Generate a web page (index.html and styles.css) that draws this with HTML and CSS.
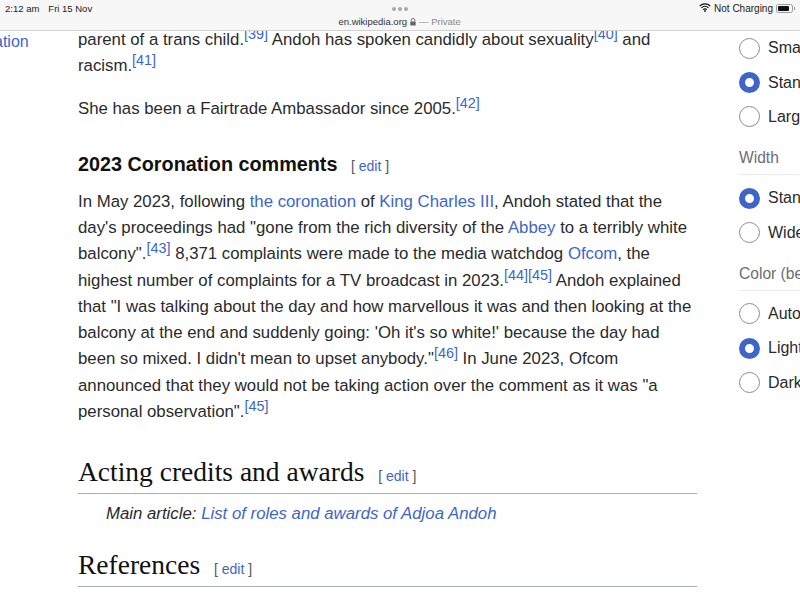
FILE: index.html
```html
<!DOCTYPE html>
<html lang="en">
<head>
    <meta charset="UTF-8">
    <meta name="viewport" content="width=device-width, initial-scale=1.0">
    <title>Adjoa Andoh</title>
    <link rel="stylesheet" href="styles.css">
</head>
<body>

<header class="browser-bar">
    <div class="status-left">
        <span>2:12 am</span>
        <span>Fri 15 Nov</span>
    </div>
    <div class="address">
        <div class="dots"><i></i><i></i><i></i></div>
        <div class="url">
            <span>en.wikipedia.org</span>
            <svg class="lock" width="6" height="8" viewBox="0 0 6 8">
                <path d="M1.2 3.5V2.2a1.8 1.8 0 0 1 3.6 0v1.3" fill="none" stroke="#666" stroke-width="0.9"/>
                <rect x="0.3" y="3.4" width="5.4" height="4.2" rx="0.7" fill="#666"/>
            </svg>
            <span class="private">— Private</span>
        </div>
    </div>
    <div class="status-right">
        <svg width="12" height="9" viewBox="0 0 12 9">
            <path d="M0.7 3.1a7.6 7.6 0 0 1 10.6 0M2.5 4.9a5 5 0 0 1 7 0M4.2 6.6a2.5 2.5 0 0 1 3.6 0" fill="none" stroke="#111" stroke-width="1.3"/>
            <circle cx="6" cy="8" r="0.9" fill="#111"/>
        </svg>
        <span class="charging">Not Charging</span>
        <div class="battery"><div class="battery-level"></div></div>
        <div class="battery-tip"></div>
    </div>
</header>

<div class="page">
    <aside class="toc-link"><a href="#">ation</a></aside>

    <main class="article">
        <p class="first">parent of a trans child.<sup>[39]</sup> Andoh has spoken candidly about sexuality<sup>[40]</sup> and racism.<sup>[41]</sup></p>
        <p class="ambassador">She has been a Fairtrade Ambassador since 2005.<sup>[42]</sup></p>

        <h3>2023 Coronation comments <span class="edit">[ <a href="#">edit</a> ]</span></h3>
        <p>In May 2023, following <a href="#">the coronation</a> of <a href="#">King Charles III</a>, Andoh stated that the day's proceedings had "gone from the rich diversity of the <a href="#">Abbey</a> to a terribly white balcony".<sup>[43]</sup> 8,371 complaints were made to the media watchdog <a href="#">Ofcom</a>, the highest number of complaints for a TV broadcast in 2023.<sup>[44][45]</sup> Andoh explained that "I was talking about the day and how marvellous it was and then looking at the balcony at the end and suddenly going: 'Oh it's so white!' because the day had been so mixed. I didn't mean to upset anybody."<sup>[46]</sup> In June 2023, Ofcom announced that they would not be taking action over the comment as it was "a personal observation".<sup>[45]</sup></p>

        <h2>Acting credits and awards <span class="edit">[ <a href="#">edit</a> ]</span></h2>
        <p class="hatnote">Main article: <a href="#">List of roles and awards of Adjoa Andoh</a></p>

        <h2 class="references">References <span class="edit">[ <a href="#">edit</a> ]</span></h2>
    </main>

    <aside class="settings">
        <label class="option"><span class="radio"></span>Small</label>
        <label class="option"><span class="radio checked"></span>Standard</label>
        <label class="option"><span class="radio"></span>Large</label>
        <div class="group-title">Width</div>
        <label class="option"><span class="radio checked"></span>Standard</label>
        <label class="option"><span class="radio"></span>Wide</label>
        <div class="group-title">Color (beta)</div>
        <label class="option"><span class="radio"></span>Automatic</label>
        <label class="option"><span class="radio checked"></span>Light</label>
        <label class="option"><span class="radio"></span>Dark</label>
    </aside>
</div>

</body>
</html>
```

FILE: styles.css
```css
html, body {
    margin: 0;
    height: 600px;
    overflow: hidden;
}

body {
    font-family: "Liberation Sans", Arial, sans-serif;
    background-color: #fff;
    color: #2a2b2c;
}

a {
    color: #3e66c8;
    text-decoration: none;
}

/* Browser bar */
.browser-bar {
    height: 31px;
    box-sizing: border-box;
    display: flex;
    justify-content: space-between;
    background-color: #f7f7f7;
    border-bottom: 1px solid #d2d2d2;
    font-size: 9.5px;
    color: #222;
}

.status-left {
    display: flex;
    gap: 9px;
    padding: 4px 0 0 5px;
    line-height: 10px;
}

.address {
    display: flex;
    flex-direction: column;
    align-items: center;
    margin-left: 8px;
}

.dots {
    display: flex;
    gap: 2px;
    margin-top: 7px;
}

.dots i {
    width: 4px;
    height: 4px;
    border-radius: 50%;
    background-color: #a8a8a8;
}

.url {
    display: flex;
    align-items: center;
    gap: 3px;
    margin-top: 6px;
    line-height: 10px;
    color: #333;
}

.private {
    color: #888;
}

.status-right {
    display: flex;
    align-items: flex-start;
    gap: 3px;
    padding: 3px 5px 0 0;
    line-height: 10px;
}

.charging {
    font-size: 10px;
    margin-top: 1px;
}

.battery {
    flex-shrink: 0;
    width: 17px;
    height: 9px;
    box-sizing: border-box;
    border: 1px solid #999;
    border-radius: 2.5px;
    padding: 1px;
    margin-top: 1px;
}

.battery-level {
    width: 11px;
    height: 5px;
    background-color: #111;
    border-radius: 1px;
}

.battery-tip {
    width: 1px;
    height: 3px;
    margin: 4px 0 0 -2px;
    background-color: #999;
}

/* Page columns */
.page {
    display: flex;
    height: 569px;
    overflow: hidden;
}

.toc-link {
    width: 78px;
    flex-shrink: 0;
    font-size: 16px;
    line-height: 22px;
    text-indent: -6px;
}

.article {
    width: 619px;
    flex-shrink: 0;
    font-size: 16.8px;
    line-height: 26.25px;
}

.article p {
    margin: 0;
}

.article sup {
    font-size: 14.4px;
    line-height: 1;
    vertical-align: 6px;
    color: #3e66c8;
}

.article .first {
    margin-top: -4px;
}

.article .ambassador {
    margin: 16px 0 0;
}

h3 {
    margin: 27px 0 10px;
    font-size: 19.8px;
    line-height: 30px;
    color: #111;
}

h2 {
    margin: 29.5px 0 0;
    padding-bottom: 4px;
    font-family: "Liberation Serif", serif;
    font-weight: normal;
    font-size: 27.5px;
    line-height: 34px;
    color: #111;
    border-bottom: 1px solid #a9adb8;
}

.edit {
    margin-left: 7px;
    font-family: "Liberation Sans", Arial, sans-serif;
    font-weight: normal;
    font-size: 14px;
    line-height: 1;
    color: #54595d;
}

h3 .edit {
    margin-left: 8px;
}

.article .hatnote {
    margin: 7px 0 0;
    padding-left: 28px;
    font-style: italic;
}

h2.references {
    margin-top: 20.75px;
}

/* Appearance settings */
.settings {
    margin-left: 42px;
    width: 120px;
    flex-shrink: 0;
    font-size: 16px;
    white-space: nowrap;
}

.option {
    display: flex;
    align-items: center;
    gap: 8px;
    height: 34.4px;
}

.radio {
    width: 21px;
    height: 21px;
    box-sizing: border-box;
    flex-shrink: 0;
    border: 1px solid #8a8d91;
    border-radius: 50%;
    background-color: #fff;
}

.radio.checked {
    border: 6px solid #3e66c8;
}

.group-title {
    margin: 12px 0 5.8px;
    height: 28px;
    font-size: 15.6px;
    line-height: 24px;
    color: #6b6e72;
    border-bottom: 1px solid #eaecf0;
}
```
